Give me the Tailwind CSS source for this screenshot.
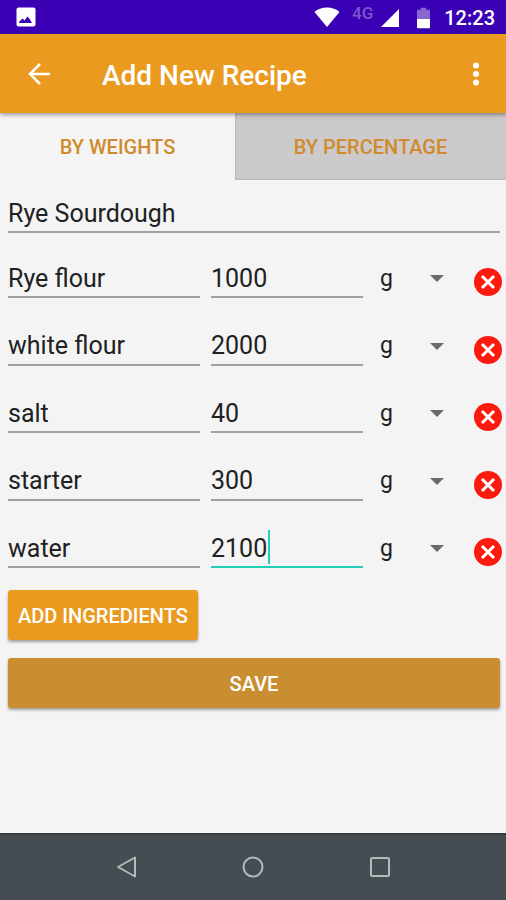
<!DOCTYPE html>
<html lang="en">

<head>
    <meta charset="UTF-8" />
    <title>Add New Recipe</title>
    <meta name="viewport" content="width=device-width, initial-scale=1.0" />
    <script src="https://cdn.jsdelivr.net/npm/@tailwindcss/browser@4"></script>
</head>

<body class="flex min-h-screen flex-col bg-[#f4f4f4] font-['Roboto',sans-serif] text-[#212121]">
    <!-- Status bar -->
    <div class="flex h-[34px] items-center bg-[#3a00b3] pl-4 pr-[11px] text-white">
        <svg class="size-5" viewBox="0 0 20 20" aria-hidden="true">
            <rect x="0.5" y="0.5" width="19" height="19" rx="2" fill="#fff" />
            <path d="M3 16l0.500-1.500 3-3 2 2 3-4 2.500 3 2 3.500z" fill="#3a00b3" />
        </svg>
        <div class="ml-auto flex items-center">
            <svg class="h-5 w-[26px]" viewBox="0 0 26 20" aria-hidden="true">
                <path d="M13 20L0.500 5C3.500 2 8 0.500 13 0.500S22.500 2 25.500 5z" fill="#fff" />
            </svg>
            <span class="ml-3 mb-2 text-[17px] leading-none font-medium text-white/35">4G</span>
            <svg class="mt-[2px] ml-2 size-[18px]" viewBox="0 0 18 18" aria-hidden="true">
                <path d="M18 0v18H0z" fill="#fff" />
            </svg>
            <svg class="mt-[2px] ml-[18px] h-[22px] w-[13px]" viewBox="0 0 14 22" aria-hidden="true">
                <path d="M4 0h6v2h4v10H0V2h4z" fill="#fff" fill-opacity="0.4" />
                <path d="M0 12h14v9a1 1 0 0 1-1 1H1a1 1 0 0 1-1-1z" fill="#fff" />
            </svg>
            <span class="mt-[2px] ml-[14px] text-xl leading-none font-medium">12:23</span>
        </div>
    </div>

    <!-- App bar -->
    <header class="relative z-10 flex h-[79px] items-center bg-[#eb9a20] pl-7 pr-5 text-white shadow-[0_2px_4px_rgba(0,0,0,0.35)]">
        <button type="button" aria-label="Back">
            <svg class="size-[22px]" viewBox="0 0 22 22" fill="none" stroke="#fff" stroke-width="2.500" aria-hidden="true">
                <path d="M22 11H2M12 1L2 11l10 10" />
            </svg>
        </button>
        <h1 class="ml-[52px] pt-1 text-[28px] leading-none font-medium">Add New Recipe</h1>
        <button type="button" class="ml-auto" aria-label="More options">
            <svg class="h-6 w-5" viewBox="0 0 20 24" fill="#fff" aria-hidden="true">
                <circle cx="10" cy="3.500" r="3" />
                <circle cx="10" cy="12" r="3" />
                <circle cx="10" cy="20.500" r="3" />
            </svg>
        </button>
    </header>

    <!-- Tabs -->
    <nav class="grid h-[67px] grid-cols-[235fr_271fr] text-xl font-medium text-[#cf8b2c]">
        <button type="button" class="pt-px">BY WEIGHTS</button>
        <button type="button" class="bg-[#cccaca] pt-px shadow-[inset_1px_-1px_2px_rgba(0,0,0,0.1)]">BY PERCENTAGE</button>
    </nav>

    <main class="flex-1 pt-[13px] pr-1 pl-2">
        <div class="mr-[2px] flex">
            <input type="text" value="Rye Sourdough" aria-label="Recipe name"
                class="h-10 w-full border-b-2 border-[#a0a0a0] pt-[2px] text-[25px] outline-none" />
        </div>

        <div class="mt-[11px]">
            <div class="grid h-[68px] grid-cols-[192fr_152fr_89px_28px] items-center gap-x-[11px]">
                <input type="text" value="Rye flour" aria-label="Ingredient 1"
                    class="h-10 w-full border-b-2 border-[#a0a0a0] pt-[2px] text-[25px] outline-none" />
                <input type="text" value="1000" aria-label="Amount 1"
                    class="h-10 w-full border-b-2 border-[#a0a0a0] pt-[2px] text-[25px] outline-none" />
                <div class="relative">
                    <select aria-label="Unit 1" class="h-10 w-full appearance-none pt-[2px] pl-[6px] text-[23px] outline-none">
                        <option>g</option>
                    </select>
                    <svg class="pointer-events-none absolute top-[17px] right-[19px] h-[7px] w-[14px]" viewBox="0 0 14 7" aria-hidden="true">
                        <path d="M0 0h14L7 7z" fill="#6b6b6b" />
                    </svg>
                </div>
                <button type="button" class="mt-2" aria-label="Remove ingredient 1">
                    <svg class="size-7" viewBox="0 0 28 28" aria-hidden="true">
                        <circle cx="14" cy="14" r="14" fill="#fb1a0e" />
                        <path d="M8 8l12 12M20 8L8 20" stroke="#fff" stroke-width="3" />
                    </svg>
                </button>
            </div>

            <div class="grid h-[67px] grid-cols-[192fr_152fr_89px_28px] items-center gap-x-[11px]">
                <input type="text" value="white flour" aria-label="Ingredient 2"
                    class="h-10 w-full border-b-2 border-[#a0a0a0] pt-[2px] text-[25px] outline-none" />
                <input type="text" value="2000" aria-label="Amount 2"
                    class="h-10 w-full border-b-2 border-[#a0a0a0] pt-[2px] text-[25px] outline-none" />
                <div class="relative">
                    <select aria-label="Unit 2" class="h-10 w-full appearance-none pt-[2px] pl-[6px] text-[23px] outline-none">
                        <option>g</option>
                    </select>
                    <svg class="pointer-events-none absolute top-[17px] right-[19px] h-[7px] w-[14px]" viewBox="0 0 14 7" aria-hidden="true">
                        <path d="M0 0h14L7 7z" fill="#6b6b6b" />
                    </svg>
                </div>
                <button type="button" class="mt-2" aria-label="Remove ingredient 2">
                    <svg class="size-7" viewBox="0 0 28 28" aria-hidden="true">
                        <circle cx="14" cy="14" r="14" fill="#fb1a0e" />
                        <path d="M8 8l12 12M20 8L8 20" stroke="#fff" stroke-width="3" />
                    </svg>
                </button>
            </div>

            <div class="grid h-[68px] grid-cols-[192fr_152fr_89px_28px] items-center gap-x-[11px]">
                <input type="text" value="salt" aria-label="Ingredient 3"
                    class="h-10 w-full border-b-2 border-[#a0a0a0] pt-[2px] text-[25px] outline-none" />
                <input type="text" value="40" aria-label="Amount 3"
                    class="h-10 w-full border-b-2 border-[#a0a0a0] pt-[2px] text-[25px] outline-none" />
                <div class="relative">
                    <select aria-label="Unit 3" class="h-10 w-full appearance-none pt-[2px] pl-[6px] text-[23px] outline-none">
                        <option>g</option>
                    </select>
                    <svg class="pointer-events-none absolute top-[17px] right-[19px] h-[7px] w-[14px]" viewBox="0 0 14 7" aria-hidden="true">
                        <path d="M0 0h14L7 7z" fill="#6b6b6b" />
                    </svg>
                </div>
                <button type="button" class="mt-2" aria-label="Remove ingredient 3">
                    <svg class="size-7" viewBox="0 0 28 28" aria-hidden="true">
                        <circle cx="14" cy="14" r="14" fill="#fb1a0e" />
                        <path d="M8 8l12 12M20 8L8 20" stroke="#fff" stroke-width="3" />
                    </svg>
                </button>
            </div>

            <div class="grid h-[67px] grid-cols-[192fr_152fr_89px_28px] items-center gap-x-[11px]">
                <input type="text" value="starter" aria-label="Ingredient 4"
                    class="h-10 w-full border-b-2 border-[#a0a0a0] pt-[2px] text-[25px] outline-none" />
                <input type="text" value="300" aria-label="Amount 4"
                    class="h-10 w-full border-b-2 border-[#a0a0a0] pt-[2px] text-[25px] outline-none" />
                <div class="relative">
                    <select aria-label="Unit 4" class="h-10 w-full appearance-none pt-[2px] pl-[6px] text-[23px] outline-none">
                        <option>g</option>
                    </select>
                    <svg class="pointer-events-none absolute top-[17px] right-[19px] h-[7px] w-[14px]" viewBox="0 0 14 7" aria-hidden="true">
                        <path d="M0 0h14L7 7z" fill="#6b6b6b" />
                    </svg>
                </div>
                <button type="button" class="mt-2" aria-label="Remove ingredient 4">
                    <svg class="size-7" viewBox="0 0 28 28" aria-hidden="true">
                        <circle cx="14" cy="14" r="14" fill="#fb1a0e" />
                        <path d="M8 8l12 12M20 8L8 20" stroke="#fff" stroke-width="3" />
                    </svg>
                </button>
            </div>

            <div class="grid h-[68px] grid-cols-[192fr_152fr_89px_28px] items-center gap-x-[11px]">
                <input type="text" value="water" aria-label="Ingredient 5"
                    class="h-10 w-full border-b-2 border-[#a0a0a0] pt-[2px] text-[25px] outline-none" />
                <div class="relative">
                    <input type="text" value="2100" aria-label="Amount 5"
                        class="block h-10 w-full border-b-2 border-[#26cdb9] pt-[2px] text-[25px] outline-none" />
                    <!-- text cursor -->
                    <span class="absolute top-[2px] left-[57px] h-[34px] w-[2px] bg-[#26cdb9]"></span>
                </div>
                <div class="relative">
                    <select aria-label="Unit 5" class="h-10 w-full appearance-none pt-[2px] pl-[6px] text-[23px] outline-none">
                        <option>g</option>
                    </select>
                    <svg class="pointer-events-none absolute top-[17px] right-[19px] h-[7px] w-[14px]" viewBox="0 0 14 7" aria-hidden="true">
                        <path d="M0 0h14L7 7z" fill="#6b6b6b" />
                    </svg>
                </div>
                <button type="button" class="mt-2" aria-label="Remove ingredient 5">
                    <svg class="size-7" viewBox="0 0 28 28" aria-hidden="true">
                        <circle cx="14" cy="14" r="14" fill="#fb1a0e" />
                        <path d="M8 8l12 12M20 8L8 20" stroke="#fff" stroke-width="3" />
                    </svg>
                </button>
            </div>
        </div>

        <div class="mt-2 mr-[2px] flex flex-col items-start gap-[18px]">
            <button type="button"
                class="h-[50px] rounded-[3px] bg-[#eb9a20] px-[10px] pt-[2px] text-xl font-medium text-white shadow-[0_2px_3px_rgba(0,0,0,0.35)]">
                ADD INGREDIENTS
            </button>
            <button type="button"
                class="h-[50px] w-full rounded-[3px] bg-[#c88e31] pt-[2px] text-xl font-medium text-white shadow-[0_2px_3px_rgba(0,0,0,0.35)]">
                SAVE
            </button>
        </div>
    </main>

    <!-- Navigation bar -->
    <footer class="grid h-[67px] grid-cols-3 place-items-center border-t-2 border-[#363d40] bg-[#454d52] px-[63px] pb-[2px]">
        <button type="button" aria-label="Back">
            <svg class="size-[22px]" viewBox="0 0 22 22" fill="none" stroke="#b4b9bb" stroke-width="2" stroke-linejoin="round" aria-hidden="true">
                <path d="M20 1.500v19L3 11z" />
            </svg>
        </button>
        <button type="button" aria-label="Home">
            <svg class="size-[22px]" viewBox="0 0 22 22" fill="none" stroke="#b4b9bb" stroke-width="2" aria-hidden="true">
                <circle cx="11" cy="11" r="9.500" />
            </svg>
        </button>
        <button type="button" aria-label="Recent apps">
            <svg class="size-[22px]" viewBox="0 0 22 22" fill="none" stroke="#b4b9bb" stroke-width="2" aria-hidden="true">
                <rect x="2" y="2" width="18" height="18" rx="1" />
            </svg>
        </button>
    </footer>
</body>

</html>
